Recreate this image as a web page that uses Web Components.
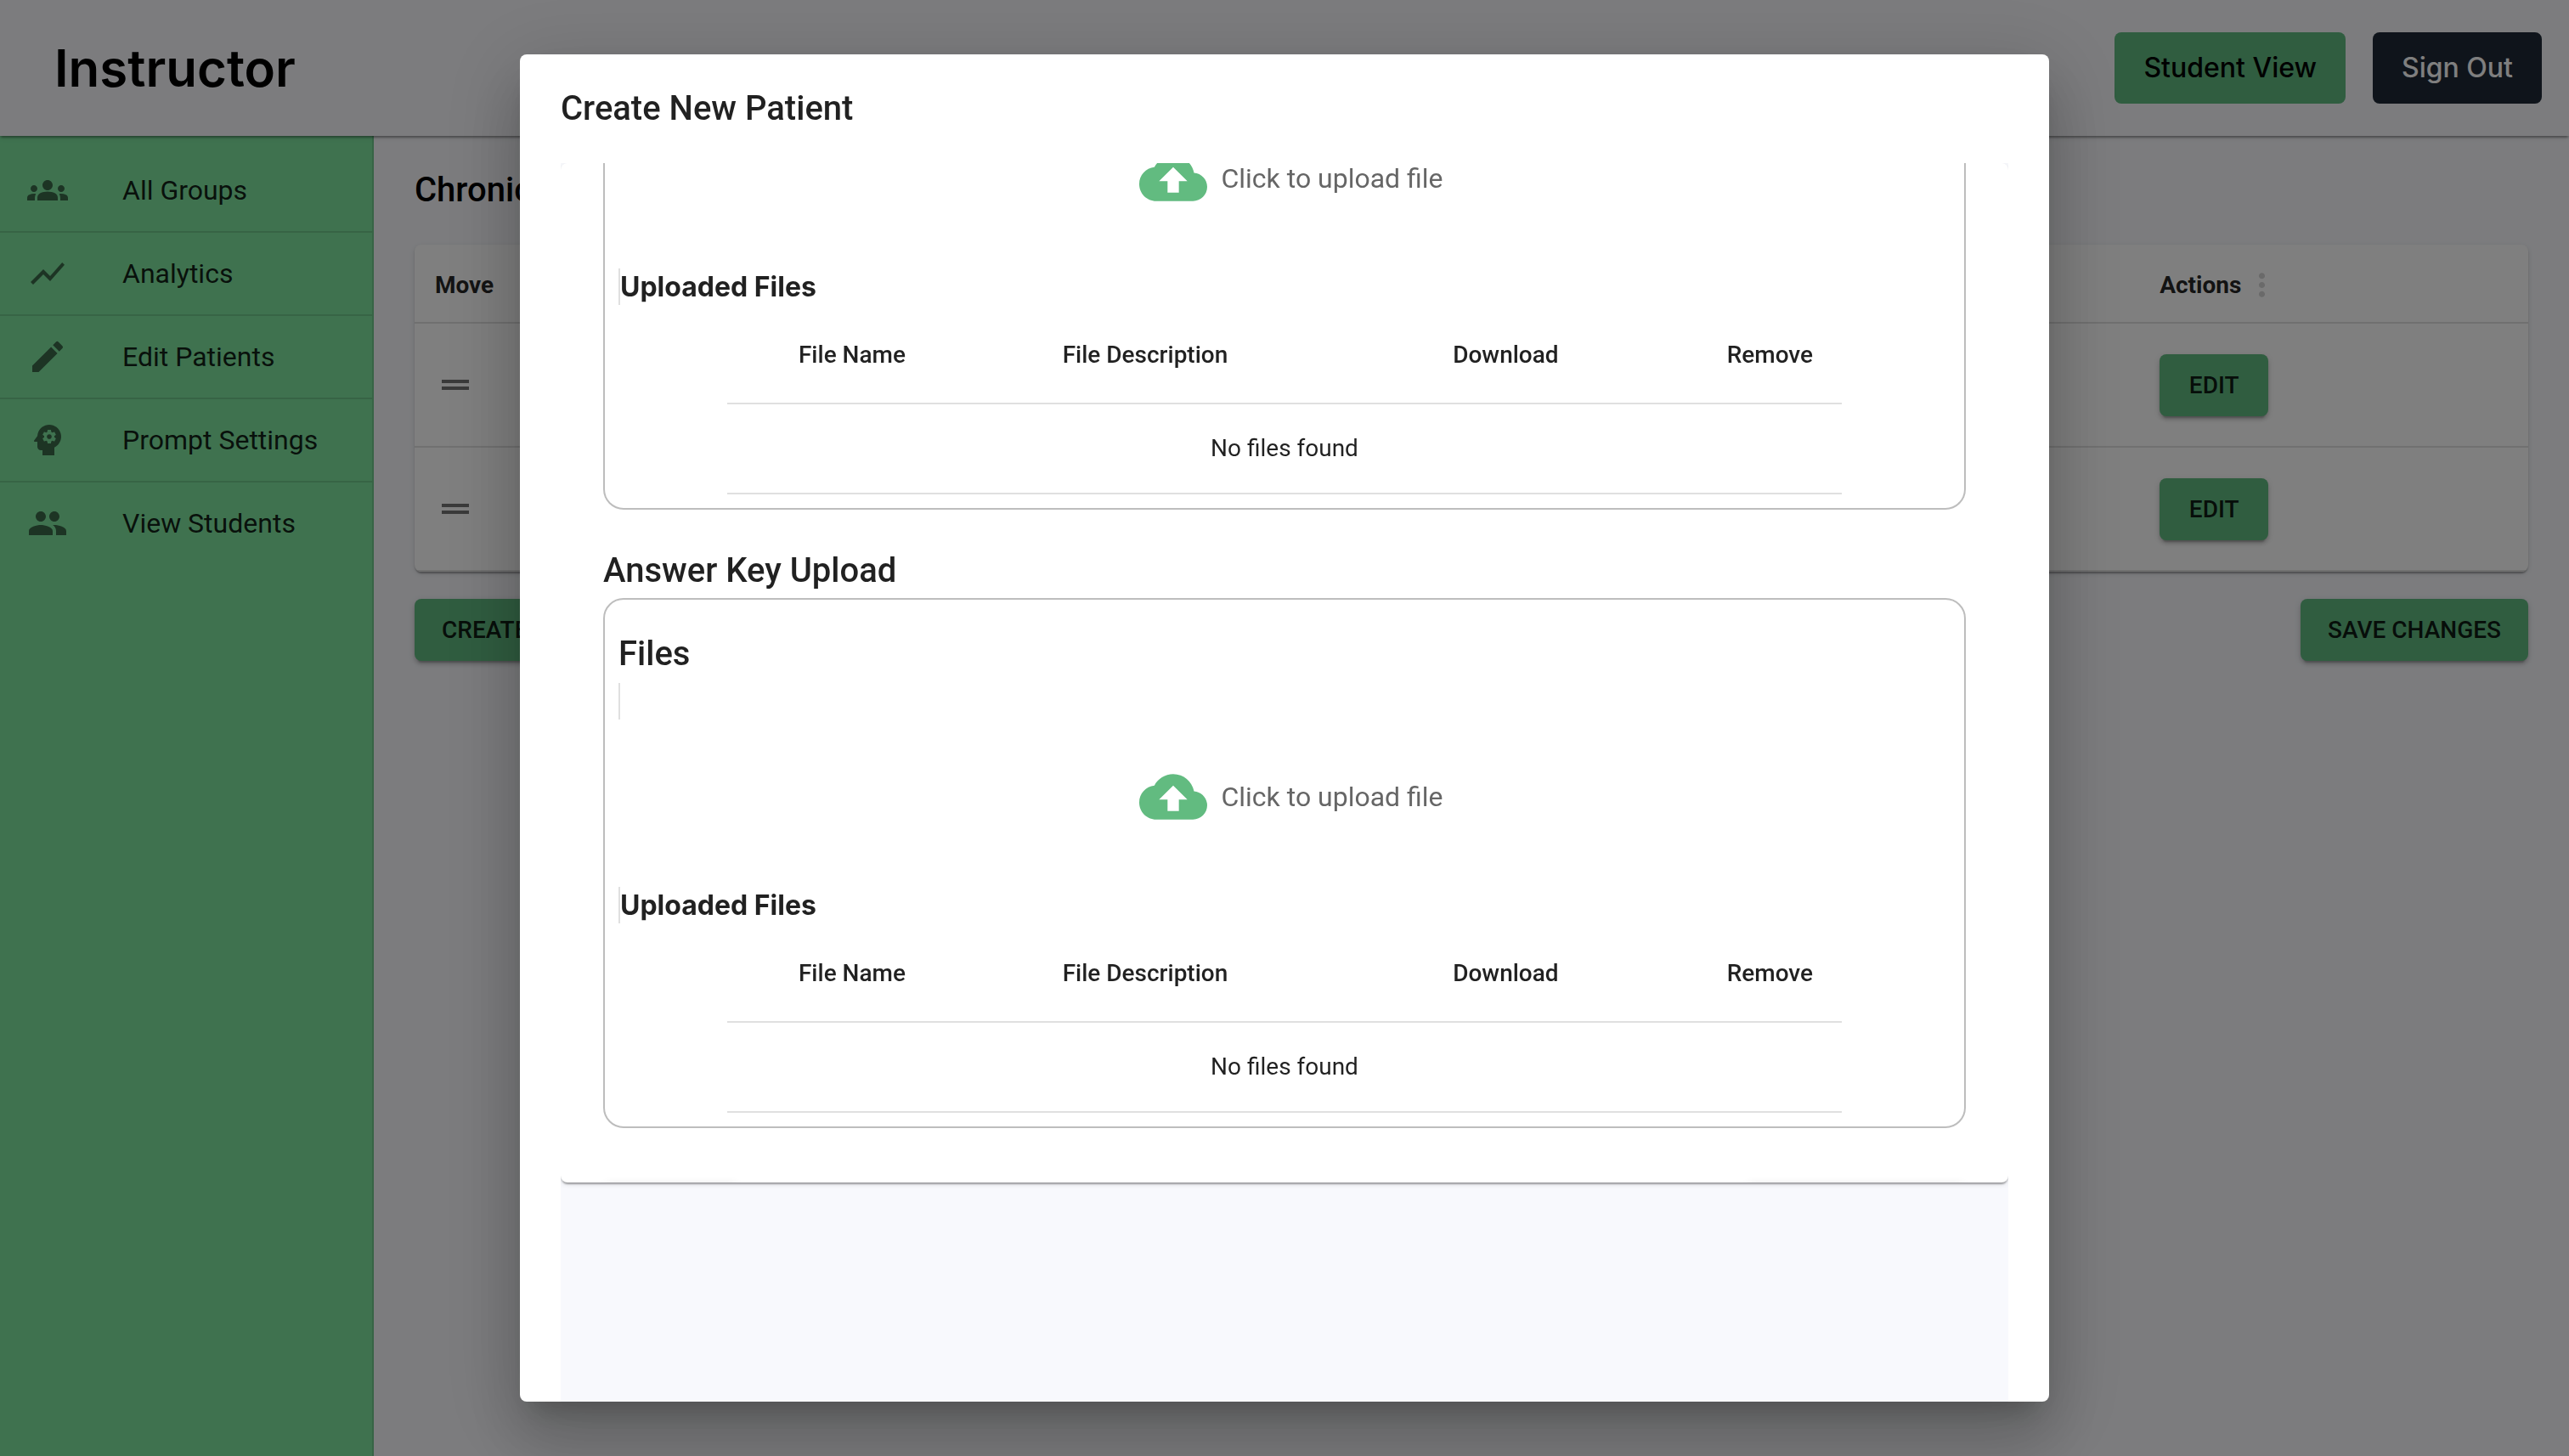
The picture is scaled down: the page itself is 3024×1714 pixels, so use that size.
<!DOCTYPE html>
<html lang="en">
<head>
<meta charset="utf-8">
<title>Instructor</title>
<style>
  html, body { margin: 0; height: 100%; }
  body {
    font-family: Roboto, "Liberation Sans", sans-serif;
    font-size: 32px;
    color: rgba(0, 0, 0, .87);
    background: #f8f9fd;
    overflow: hidden;
    --green: #60ba80;
    --page: #f8f9fd;
    --paper-shadow: 0 4px 2px -2px rgba(0,0,0,.2), 0 2px 2px rgba(0,0,0,.14), 0 2px 6px rgba(0,0,0,.12);
    --button-shadow: 0 6px 2px -4px rgba(0,0,0,.2), 0 4px 4px rgba(0,0,0,.14), 0 2px 10px rgba(0,0,0,.12);
  }
</style>
</head>
<body>
<instructor-app></instructor-app>

<script>
const ICONS = {
  groups: 'M12 12.75c1.63 0 3.07.39 4.24.9 1.08.48 1.76 1.56 1.76 2.73V18H6v-1.61c0-1.18.68-2.26 1.76-2.73 1.17-.52 2.61-.91 4.24-.91zM4 13c1.1 0 2-.9 2-2s-.9-2-2-2-2 .9-2 2 .9 2 2 2zm1.13 1.1c-.37-.06-.74-.1-1.13-.1-.99 0-1.93.21-2.78.58C.48 14.9 0 15.62 0 16.43V18h4.5v-1.61c0-.83.23-1.61.63-2.29zM20 13c1.1 0 2-.9 2-2s-.9-2-2-2-2 .9-2 2 .9 2 2 2zm4 3.43c0-.81-.48-1.53-1.22-1.85-.85-.37-1.79-.58-2.78-.58-.39 0-.76.04-1.13.1.4.68.63 1.46.63 2.29V18H24v-1.57zM12 6c1.66 0 3 1.34 3 3s-1.34 3-3 3-3-1.34-3-3 1.34-3 3-3z',
  chart: 'm3.5 18.49 6-6.01 4 4L22 6.92l-1.41-1.41-7.09 7.97-4-4L2 16.99z',
  edit: 'M3 17.25V21h3.75L17.81 9.94l-3.75-3.75L3 17.25zM20.71 7.04c.39-.39.39-1.02 0-1.41l-2.34-2.34a.9959.9959 0 0 0-1.41 0l-1.83 1.83 3.75 3.75 1.83-1.83z',
  psychology: 'M13 8.57c-.79 0-1.43.64-1.43 1.43s.64 1.43 1.43 1.43 1.43-.64 1.43-1.43-.64-1.43-1.43-1.43zM13 3C9.25 3 6.2 5.94 6.02 9.64L4.1 12.2c-.25.33-.01.8.4.8H6v3c0 1.1.9 2 2 2h1v3h7v-4.68c2.36-1.12 4-3.53 4-6.32 0-3.87-3.13-7-7-7zm3 7c0 .13-.01.26-.02.39l.83.66c.08.06.1.16.05.25l-.8 1.39c-.05.09-.16.12-.24.09l-.99-.4c-.21.16-.43.29-.67.39L14 13.83c-.01.1-.1.17-.2.17h-1.6c-.1 0-.18-.07-.2-.17l-.15-1.06c-.25-.1-.47-.23-.68-.39l-.99.4c-.09.03-.2 0-.25-.09l-.8-1.39c-.05-.08-.03-.19.05-.25l.84-.66c-.01-.13-.02-.26-.02-.39s.02-.27.04-.39l-.85-.66c-.08-.06-.1-.16-.05-.26l.8-1.38c.05-.09.15-.12.24-.09l1 .4c.2-.15.43-.29.67-.39L12 6.17c.02-.1.1-.17.2-.17h1.6c.1 0 .18.07.2.17l.15 1.06c.24.1.46.23.67.39l1-.4c.09-.03.2 0 .24.09l.8 1.38c.05.09.03.2-.05.26l-.85.66c.03.12.04.25.04.39z',
  people: 'M16 11c1.66 0 2.99-1.34 2.99-3S17.66 5 16 5c-1.66 0-3 1.34-3 3s1.34 3 3 3zm-8 0c1.66 0 2.99-1.34 2.99-3S9.66 5 8 5C6.34 5 5 6.34 5 8s1.34 3 3 3zm0 2c-2.33 0-7 1.17-7 3.5V19h14v-2.5c0-2.33-4.67-3.5-7-3.5zm8 0c-.29 0-.62.02-.97.05 1.16.84 1.97 1.97 1.97 3.45V19h6v-2.5c0-2.33-4.67-3.5-7-3.5z',
  drag: 'M20 9H4v2h16V9zM4 15h16v-2H4v2z',
  more: 'M12 8c1.1 0 2-.9 2-2s-.9-2-2-2-2 .9-2 2 .9 2 2 2zm0 2c-1.1 0-2 .9-2 2s.9 2 2 2 2-.9 2-2-.9-2-2-2zm0 6c-1.1 0-2 .9-2 2s.9 2 2 2 2-.9 2-2-.9-2-2-2z',
  cloud: 'M19.35 10.04C18.67 6.59 15.64 4 12 4 9.11 4 6.6 5.64 5.35 8.04 2.34 8.36 0 10.91 0 14c0 3.31 2.69 6 6 6h13c2.76 0 5-2.24 5-5 0-2.64-2.05-4.78-4.65-4.96zM14 13v4h-4v-4H7l5-5 5 5h-3z'
};

function define(name, render) {
  customElements.define(name, class extends HTMLElement {
    constructor() {
      super();
      this.attachShadow({ mode: 'open' });
    }
    connectedCallback() {
      this.shadowRoot.innerHTML = render(this);
    }
  });
}

define('ui-icon', el => `
  <style>
    :host { display: block; flex: none; width: var(--icon-size, 48px); height: var(--icon-size, 48px); }
    svg { display: block; width: 100%; height: 100%; fill: currentColor; }
  </style>
  <svg viewBox="0 0 24 24" aria-hidden="true"><path d="${ICONS[el.getAttribute('name')]}"/></svg>`);

define('ui-button', () => `
  <style>
    :host { display: inline-block; }
    button {
      display: block; box-sizing: border-box; min-width: 128px; margin: 0; padding: 12px 32px;
      border: 0; border-radius: 8px; background: var(--green); color: rgba(0,0,0,.87);
      font: 500 28px/49px Roboto, sans-serif; white-space: nowrap; text-transform: uppercase;
      box-shadow: var(--button-shadow);
    }
  </style>
  <button type="button"><slot></slot></button>`);

define('header-button', () => `
  <style>
    :host { display: block; }
    button {
      display: block; margin: 0; padding: 18px 34px; border: 0; border-radius: 8px;
      background: var(--fill, var(--green)); color: var(--ink, #000);
      font: 500 32px/48px Inter, sans-serif; white-space: nowrap;
    }
    :host([dark]) { --fill: #1f2937; --ink: #fff; }
  </style>
  <button type="button"><slot></slot></button>`);

define('app-header', () => `
  <style>
    :host {
      display: flex; align-items: center; justify-content: space-between; box-sizing: border-box;
      height: 160px; padding: 0 32px 0 64px; background: var(--page); color: #000;
      box-shadow: 0 4px 2px -2px rgba(0,0,0,.2), 0 2px 2px rgba(0,0,0,.14), 0 2px 6px rgba(0,0,0,.12);
      position: relative; z-index: 1;
    }
    h1 { margin: 0; font: 600 60px/72px Inter, sans-serif; }
    div { display: flex; gap: 32px; }
  </style>
  <h1>Instructor</h1>
  <div><header-button>Student View</header-button><header-button dark>Sign Out</header-button></div>`);

define('nav-item', el => `
  <style>
    :host { display: block; border-bottom: 2px solid rgba(0,0,0,.12); }
    :host(:last-of-type) { border-bottom: 0; }
    a { display: flex; align-items: center; gap: 64px; height: 96px; padding: 0 32px; color: inherit; text-decoration: none; line-height: 48px; white-space: nowrap; }
    ui-icon { color: rgba(0,0,0,.54); }
  </style>
  <a href="#"><ui-icon name="${el.getAttribute('icon')}"></ui-icon><span><slot></slot></span></a>`);

define('side-nav', () => `
  <style>
    :host { display: block; flex: none; box-sizing: border-box; width: 440px; padding-top: 16px; background: #7ee49f; border-right: 2px solid rgba(0,0,0,.12); }
  </style>
  <nav>
    <nav-item icon="groups">All Groups</nav-item>
    <nav-item icon="chart">Analytics</nav-item>
    <nav-item icon="edit">Edit Patients</nav-item>
    <nav-item icon="psychology">Prompt Settings</nav-item>
    <nav-item icon="people">View Students</nav-item>
  </nav>`);

define('patient-table', () => {
  const row = `<tr><td><ui-icon name="drag"></ui-icon></td><td><ui-button>Edit</ui-button></td></tr>`;
  return `
  <style>
    :host { display: block; background: #fff; border-radius: 8px; box-shadow: var(--paper-shadow); overflow: hidden; }
    table { width: 100%; border-collapse: separate; border-spacing: 0; table-layout: fixed; }
    th, td { box-sizing: border-box; padding: 0 24px; text-align: left; vertical-align: middle; border-bottom: 2px solid #e0e0e0; }
    th { height: 93px; padding-top: 4px; font: 700 28px/42px Roboto, sans-serif; }
    td { height: 146px; }
    .actions { width: 18.4%; }
    .head { display: flex; align-items: center; gap: 3px; }
    button { padding: 0; border: 0; background: none; color: #d4d4d4; --icon-size: 43px; }
    td ui-icon { color: rgba(0,0,0,.54); }
  </style>
  <table>
    <thead><tr><th>Move</th><th class="actions"><div class="head">Actions<button type="button" aria-label="Column actions"><ui-icon name="more"></ui-icon></button></div></th></tr></thead>
    <tbody>${row}${row}</tbody>
  </table>`;
});

define('patients-page', () => `
  <style>
    :host { display: flex; flex-direction: column; gap: 32px; flex: 1; min-width: 0; padding: 32px 48px; }
    h2 { margin: 0; font-size: 40px; line-height: 64px; font-weight: 500; color: #000; }
    .bar { display: flex; justify-content: space-between; }
  </style>
  <h2>Chronic</h2>
  <patient-table></patient-table>
  <div class="bar"><ui-button>Create Patient</ui-button><ui-button>Save Changes</ui-button></div>`);

define('upload-card', el => `
  <style>
    :host { display: block; flex: none; box-sizing: border-box; padding: 32px 16px 16px; border: 2px solid #bdbdbd; border-radius: 24px; }
    :host([continued]) { border-top: 0; border-radius: 0 0 24px 24px; padding-top: 0; }
    h3 { margin: 0; font-size: 40px; line-height: 64px; font-weight: 500; }
    h4 { margin: 0; font: 700 32px/43px Inter, sans-serif; }
    .rule { box-sizing: border-box; height: 43px; margin: 2px 0; border-left: 2px solid #e0e0e0; }
    .pick { display: flex; align-items: center; justify-content: center; gap: 16px; width: 100%; height: 80px; margin: 51px 0 66px; padding: 0 0 0 16px; border: 0; background: none; color: #666; font: 400 32px/48px Roboto, sans-serif; }
    .pick ui-icon { --icon-size: 80px; color: #62bb80; }
    .scroll { margin: 3px 128px 0; }
    table { width: 100%; border-collapse: separate; border-spacing: 0; table-layout: fixed; font-size: 28px; }
    th, td { padding: 32px 16px; text-align: center; border-bottom: 2px solid #e0e0e0; }
    th { line-height: 48px; font-weight: 500; }
    td { line-height: 40px; }
  </style>
  ${el.hasAttribute('continued') ? '' : '<h3>Files</h3><div class="rule"></div>'}
  <button type="button" class="pick"><ui-icon name="cloud"></ui-icon>Click to upload file</button>
  <div class="rule"><h4>Uploaded Files</h4></div>
  <div class="scroll"><table>
    <colgroup><col style="width:22.4%"><col style="width:30.2%"><col style="width:34.5%"><col></colgroup>
    <thead><tr><th>File Name</th><th>File Description</th><th>Download</th><th>Remove</th></tr></thead>
    <tbody><tr><td colspan="4">No files found</td></tr></tbody>
  </table></div>`);

define('patient-form', () => `
  <style>
    :host {
      display: flex; flex-direction: column; justify-content: flex-end; box-sizing: border-box; height: 70vh;
      padding: 0 50px; overflow: hidden; background: #fff; border-radius: 8px; box-shadow: var(--paper-shadow);
    }
    h3 { flex: none; margin: 40px 0 0; font-size: 40px; line-height: 64px; font-weight: 500; }
    .foot { display: flex; flex: none; justify-content: space-between; height: 0; margin-top: 64px; }
    .foot i { flex: none; height: 73px; width: 160px; border-radius: 8px; box-shadow: var(--button-shadow); }
    .foot i + i { width: 260px; }
  </style>
  <upload-card continued></upload-card>
  <h3>Answer Key Upload</h3>
  <upload-card></upload-card>
  <div class="foot"><i></i><i></i></div>`);

define('modal-dialog', el => `
  <style>
    :host { position: fixed; inset: 0; z-index: 10; display: flex; justify-content: center; padding: 64px; background: rgba(0,0,0,.5); }
    section {
      display: flex; flex-direction: column; box-sizing: border-box; width: 100%; max-width: 1800px; overflow: hidden;
      background: #fff; border-radius: 8px;
      box-shadow: 0 22px 30px -14px rgba(0,0,0,.2), 0 48px 76px 6px rgba(0,0,0,.14), 0 18px 92px 16px rgba(0,0,0,.12);
    }
    h2 { flex: none; margin: 0; padding: 32px 48px; font-size: 40px; line-height: 64px; font-weight: 500; }
    .body { flex: 1; min-height: 0; margin: 0 48px; overflow: hidden; background: var(--page); }
  </style>
  <section role="dialog" aria-modal="true" aria-labelledby="title">
    <h2 id="title">${el.getAttribute('heading')}</h2>
    <div class="body"><slot></slot></div>
  </section>`);

define('instructor-app', () => `
  <style>
    :host { display: flex; flex-direction: column; height: 100vh; }
    .row { display: flex; flex: 1; min-height: 0; }
  </style>
  <app-header></app-header>
  <div class="row"><side-nav></side-nav><patients-page></patients-page></div>
  <modal-dialog heading="Create New Patient"><patient-form></patient-form></modal-dialog>`);
</script>
</body>
</html>
